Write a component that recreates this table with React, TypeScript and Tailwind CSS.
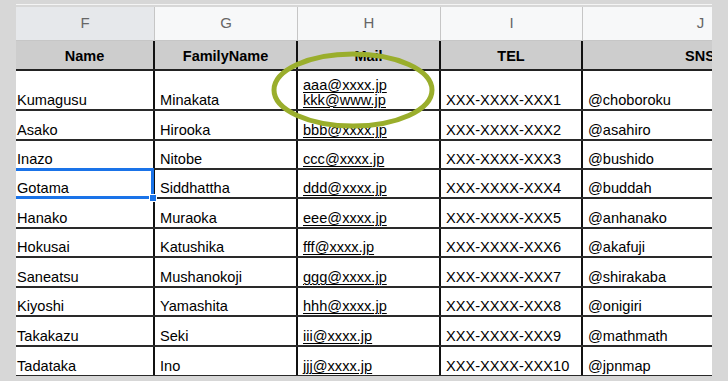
import React from "react";

const cols = [
  { letter: "F", w: 139, pl: "pl-[1px]" },
  { letter: "G", w: 143, pl: "pl-[5px]" },
  { letter: "H", w: 143, pl: "pl-[5px]" },
  { letter: "I", w: 142, pl: "pl-[5px]" },
  { letter: "J", w: 236, pl: "pl-[5px]" },
];

const headers = ["Name", "FamilyName", "Mail", "TEL", "SNS"];

const rows: { cells: (string | string[])[]; h: number }[] = [
  { cells: ["Kumagusu", "Minakata", ["aaa@xxxx.jp", "kkk@www.jp"], "XXX-XXXX-XXX1", "@choboroku"], h: 40 },
  { cells: ["Asako", "Hirooka", "bbb@xxxx.jp", "XXX-XXXX-XXX2", "@asahiro"], h: 30 },
  { cells: ["Inazo", "Nitobe", "ccc@xxxx.jp", "XXX-XXXX-XXX3", "@bushido"], h: 29 },
  { cells: ["Gotama", "Siddhattha", "ddd@xxxx.jp", "XXX-XXXX-XXX4", "@buddah"], h: 29 },
  { cells: ["Hanako", "Muraoka", "eee@xxxx.jp", "XXX-XXXX-XXX5", "@anhanako"], h: 30 },
  { cells: ["Hokusai", "Katushika", "fff@xxxx.jp", "XXX-XXXX-XXX6", "@akafuji"], h: 29 },
  { cells: ["Saneatsu", "Mushanokoji", "ggg@xxxx.jp", "XXX-XXXX-XXX7", "@shirakaba"], h: 30 },
  { cells: ["Kiyoshi", "Yamashita", "hhh@xxxx.jp", "XXX-XXXX-XXX8", "@onigiri"], h: 29 },
  { cells: ["Takakazu", "Seki", "iii@xxxx.jp", "XXX-XXXX-XXX9", "@mathmath"], h: 30 },
  { cells: ["Tadataka", "Ino", "jjj@xxxx.jp", "XXX-XXXX-XXX10", "@jpnmap"], h: 30 },
];

export default function App() {
  return (
    <div
      className="relative w-[728px] h-[381px] overflow-hidden bg-[#d7d7d7] pl-[16px] pt-[4px]"
      style={{ fontFamily: '"Liberation Sans", Arial, sans-serif' }}
    >
      <div className="w-[696px] h-[372px] overflow-hidden flex flex-col">
        <div className="h-[1px] bg-[#f4f4f4] shrink-0" />
        <div className="h-[2px] shrink-0" />
        {/* column letters */}
        <div className="flex h-[34px] shrink-0 border-b border-[#c6c6c6]">
          {cols.map((c, i) => (
            <div
              key={c.letter}
              style={{ width: c.w }}
              className={`shrink-0 flex items-center justify-center text-[15px] text-[#666] border-r border-[#c6c6c6] ${
                i === 0 ? "bg-[#e6e8eb]" : "bg-[#f7f8f9]"
              }`}
            >
              {c.letter}
            </div>
          ))}
        </div>
        {/* header row */}
        <div className="flex h-[30px] shrink-0 bg-[#cdcdcd] border-b-2 border-[#222]">
          {headers.map((h, i) => (
            <div
              key={h}
              style={{ width: cols[i].w }}
              className="shrink-0 flex items-end justify-center pb-[1px] font-bold text-[14.5px] text-black border-r-2 border-[#111]"
            >
              {h}
            </div>
          ))}
        </div>
        {rows.map((r, ri) => (
          <div
            key={ri}
            style={{ height: r.h }}
            className="flex shrink-0 bg-white border-b-2 border-[#2a2a2a]"
          >
            {r.cells.map((cell, ci) => (
              <div
                key={ci}
                style={{ width: cols[ci].w }}
                className={`relative shrink-0 flex flex-col justify-end pb-[1px] ${cols[ci].pl} text-[14.6px] leading-[15px] text-black border-r-2 border-[#111] whitespace-nowrap`}
              >
                {Array.isArray(cell) ? (
                  <div className="flex flex-col mb-[1px]">
                    {cell.map((l) => (
                      <span key={l} className="underline decoration-1 underline-offset-2 leading-[14.5px]">
                        {l}
                      </span>
                    ))}
                  </div>
                ) : ci === 2 ? (
                  <span className="underline decoration-1 underline-offset-2">{cell}</span>
                ) : (
                  <span>{cell}</span>
                )}
                {ri === 3 && ci === 0 && (
                  <>
                    <div className="absolute z-10 left-0 right-[-1px] top-[-2px] bottom-[-2px] border-[3px] border-l-0 border-[#1a73e8]" />
                    <div className="absolute z-10 right-[-4px] bottom-[-5px] w-[8px] h-[8px] bg-[#1a73e8] border border-white" />
                  </>
                )}
              </div>
            ))}
          </div>
        ))}
      </div>
      <svg
        className="absolute left-0 top-0 pointer-events-none z-20"
        width="728"
        height="381"
        viewBox="0 0 728 381"
      >
        <ellipse
          cx="353"
          cy="90"
          rx="79"
          ry="36"
          fill="none"
          stroke="#9aae2c"
          strokeWidth="5"
        />
      </svg>
    </div>
  );
}
